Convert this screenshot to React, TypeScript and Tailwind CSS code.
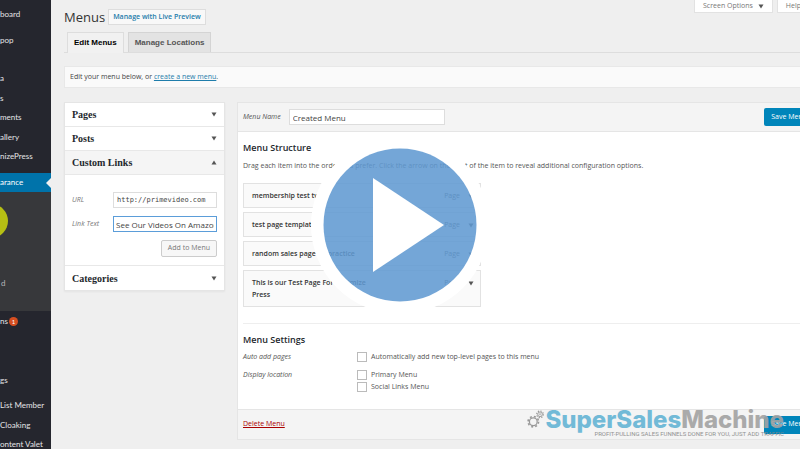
import { useState } from 'react';

interface MenuItem {
  title: string;
  tall?: boolean;
}

const menuItems: MenuItem[] = [
  { title: 'membership test two' },
  { title: 'test page template' },
  { title: 'random sales page w/ practice' },
  { title: 'This is our Test Page For Optimize Press', tall: true },
];

const Arrow = ({ up = false }: { up?: boolean }) => (
  <svg viewBox="0 0 6 5" className="h-[5px] w-[6px] shrink-0 fill-[#555]">
    <path d={up ? 'M0.5 4.5L3 0.5L5.5 4.5Z' : 'M0.5 0.5L3 4.5L5.5 0.5Z'} />
  </svg>
);

const SideLink = ({ label, className = '' }: { label: string; className?: string }) => (
  <a href="#" className={`flex items-center whitespace-nowrap ${className}`}>{label}</a>
);

function Sidebar() {
  return (
    <nav className="w-[51px] shrink-0 overflow-hidden bg-[#25262e] font-[Lato,sans-serif] text-[8px] leading-[19px] text-[#e4e4e6]">
      <SideLink label="board" className="mt-1 h-5" />
      <SideLink label="pop" className="mt-[6px] h-5" />
      <SideLink label="a" className="mt-[18px] h-5" />
      <SideLink label="s" className="h-5" />
      <SideLink label="ments" className="h-[19px]" />
      <SideLink label="allery" className="h-5" />
      <SideLink label="nizePress" className="h-[19px]" />
      <a href="#" className="mt-[7px] flex h-[19px] items-center justify-between bg-[#0073aa] text-white">
        arance
        <svg viewBox="0 0 5 10" className="h-[10px] w-[5px] fill-[#f0f0f0]">
          <path d="M5 0V10L0 5Z" />
        </svg>
      </a>
      <div className="h-[119px] overflow-hidden bg-[#37383b] pt-3">
        <div className="-ml-[26px] size-[34px] rounded-full bg-[#b6bf14]" />
        <SideLink label="d" className="mt-[35px] h-5 pl-px text-[#b5b5b8]" />
      </div>
      <a href="#" className="flex h-5 items-center gap-[1px]">
        ns
        <span className="flex size-[9px] items-center justify-center rounded-full bg-[#d54e21] text-[6px] text-white">1</span>
      </a>
      <SideLink label="gs" className="mt-[39px] h-5" />
      <SideLink label="List Member" className="mt-[5px] h-5" />
      <SideLink label="Cloaking" className="h-5" />
      <SideLink label="ontent Valet" className="h-[18px]" />
    </nav>
  );
}

function Section({ title, open = false }: { title: string; open?: boolean }) {
  return (
    <button className={`flex h-6 w-full items-center justify-between px-[7px] font-['Liberation_Serif',serif] text-[10px] font-bold text-[#23282d] ${open ? 'bg-[#f5f5f5]' : 'bg-white'}`}>
      {title}
      <Arrow up={open} />
    </button>
  );
}

function LinkPanel() {
  const [url, setUrl] = useState('http://primevideo.com');
  const [text, setText] = useState('See Our Videos On Amazon');

  return (
    <div className="w-[161px] shrink-0 divide-y divide-[#e8e8e8] border border-[#e5e5e5] bg-white shadow-xs">
      <Section title="Pages" />
      <Section title="Posts" />
      <Section title="Custom Links" open />
      <div className="flex h-[91px] flex-col gap-2 px-[7px] pt-[17px]">
        <label className="flex items-center justify-between italic text-[#777]">
          URL
          <input
            value={url}
            onChange={e => setUrl(e.target.value)}
            className="h-4 w-[104px] border border-[#ddd] px-[3px] font-['DejaVu_Sans_Mono',monospace] text-[7px] text-[#444] not-italic"
          />
        </label>
        <label className="flex items-center justify-between italic text-[#777]">
          Link Text
          <input
            value={text}
            onChange={e => setText(e.target.value)}
            className="h-4 w-[104px] border border-[#5b9dd9] px-[2px] text-[8px] text-[#444] not-italic"
          />
        </label>
        <button className="h-[17px] self-end rounded-xs border border-[#ccc] bg-[#f7f7f7] px-[6px] text-[#777]">Add to Menu</button>
      </div>
      <Section title="Categories" />
    </div>
  );
}

const SaveButton = () => (
  <button className="h-[18px] rounded-xs bg-[#0085ba] px-[7px] whitespace-nowrap text-white">Save Menu</button>
);

function CheckOption({ label }: { label: string }) {
  return (
    <label className="flex h-3 items-center gap-1">
      <input type="checkbox" className="size-[10px] appearance-none border border-[#bbb] bg-white" />
      {label}
    </label>
  );
}

function MenuEditor() {
  const [name, setName] = useState('Created Menu');

  return (
    <div className="min-w-0 flex-1 border border-[#e5e5e5] bg-white">
      <div className="flex h-[29px] items-center border-b border-[#e5e5e5] bg-[#f4f4f4] px-[5px]">
        <label className="flex flex-1 items-center gap-2 italic text-[#555]">
          Menu Name
          <input
            value={name}
            onChange={e => setName(e.target.value)}
            className="h-4 w-[156px] border border-[#ddd] bg-white px-[3px] text-[8px] text-[#444] not-italic"
          />
        </label>
        <SaveButton />
      </div>

      <div className="h-[277px] px-[5px] pt-[9px]">
        <h2 className="text-[9px] leading-[13px] font-semibold text-[#23282d]">Menu Structure</h2>
        <p className="mt-[5px] leading-[14px] whitespace-nowrap text-[#555]">
          Drag each item into the order you prefer. Click the arrow on the right of the item to reveal additional configuration options.
        </p>
        <ul className="mt-[10px] flex w-[238px] flex-col gap-1">
          {menuItems.map(item => (
            <li
              key={item.title}
              className={`flex justify-between border border-[#e2e2e2] bg-[#fafafa] px-2 pt-[6px] leading-[12px] ${item.tall ? 'h-[37px]' : 'h-[25px]'}`}
            >
              <span className="w-[124px] font-semibold text-[#333]">{item.title}</span>
              <span className="-mr-[2px] flex h-3 items-center gap-2 text-[#555]">
                Page
                <Arrow />
              </span>
            </li>
          ))}
        </ul>

        <div className="mt-4 border-t border-[#eee] pt-[9px]">
          <h2 className="text-[9px] leading-[13px] font-semibold text-[#23282d]">Menu Settings</h2>
          <div className="mt-[5px] grid grid-cols-[114px_1fr] gap-y-[6px] leading-[12px] text-[#555]">
            <span className="italic">Auto add pages</span>
            <CheckOption label="Automatically add new top-level pages to this menu" />
            <span className="italic">Display location</span>
            <div>
              <CheckOption label="Primary Menu" />
              <CheckOption label="Social Links Menu" />
            </div>
          </div>
        </div>
      </div>

      <div className="flex h-[30px] items-center justify-between border-t border-[#e5e5e5] bg-[#f4f4f4] px-[5px]">
        <a href="#" className="text-[#a00] underline">Delete Menu</a>
        <SaveButton />
      </div>
    </div>
  );
}

const PlayButton = () => (
  <button aria-label="Play video" className="absolute top-1/2 left-1/2 size-[178px] -translate-x-1/2 -translate-y-1/2">
    <svg viewBox="0 0 178 178" className="size-full">
      <circle cx="89" cy="89" r="82.5" fill="none" stroke="#fff" strokeWidth="13" />
      <circle cx="89" cy="89" r="76.5" fill="#5f99d1" fillOpacity="0.87" />
      <path d="M62 42V136L133 89Z" fill="#fff" />
    </svg>
  </button>
);

function Watermark() {
  return (
    <div className="pointer-events-none absolute right-4 bottom-3 flex items-start opacity-90">
      <svg viewBox="0 0 20 20" className="h-5 w-[18px] fill-none stroke-[#8f8f8f]">
        <circle cx="7" cy="13" r="4.3" strokeWidth="1.4" />
        <circle cx="7" cy="13" r="5.8" strokeWidth="1.8" strokeDasharray="2.2 2.35" />
        <circle cx="14.5" cy="4.8" r="2.6" strokeWidth="1" />
        <circle cx="14.5" cy="4.8" r="3.7" strokeWidth="1.3" strokeDasharray="1.4 1.5" />
        <circle cx="14.5" cy="4.8" r="0.8" strokeWidth="0.7" />
      </svg>
      <div className="text-right">
        <div className="font-['Inter',sans-serif] text-[24px] leading-[22px] font-extrabold text-[#a3a3a3]">
          <span className="text-[#65b4d4]">SuperSales</span>Machine
        </div>
        <div className="font-['Liberation_Sans_Narrow','Roboto',sans-serif] text-[6px] leading-[6px] text-[#888]">
          PROFIT-PULLING SALES FUNNELS DONE FOR YOU, JUST ADD TRAFFIC
        </div>
      </div>
    </div>
  );
}

export default function App() {
  return (
    <div className="relative flex h-screen overflow-hidden bg-[#efefef] font-['Open_Sans',sans-serif] text-[7px] text-[#444]">
      <Sidebar />
      <main className="min-w-0 flex-1 overflow-hidden pl-[13px]">
        <div className="-mr-5">
          <header className="flex h-8 items-start justify-between">
            <div className="flex items-center gap-[3px] pt-2">
              <h1 className="text-[13px] leading-[18px] text-[#333]">Menus</h1>
              <a href="#" className="flex h-4 items-center border border-[#ddd] bg-[#f8f8f8] px-1 font-semibold text-[#1f7dab]">Manage with Live Preview</a>
            </div>
            <div className="flex gap-1 text-[#777]">
              <button className="flex h-[13px] items-center gap-[5px] border border-t-0 border-[#e2e2e2] bg-white px-2">
                Screen Options
                <Arrow />
              </button>
              <button className="flex h-[13px] items-center gap-1 border border-t-0 border-[#e2e2e2] bg-white px-2">
                Help
                <Arrow />
              </button>
            </div>
          </header>

          <div className="flex h-[21px] gap-1 border-b border-[#ddd] pl-[3px] font-['Liberation_Sans',sans-serif] text-[8px] font-bold">
            <button className="-mb-px border border-b-0 border-[#ddd] bg-[#f1f1f1] px-[6px] text-black">Edit Menus</button>
            <button className="border border-b-0 border-[#d4d4d4] bg-[#e3e3e3] px-[6px] text-[#555]">Manage Locations</button>
          </div>

          <p className="mt-[13px] flex h-[22px] items-center border border-[#e8e8e8] bg-[#fafafa] px-[5px] pt-px whitespace-pre">
            Edit your menu below, or <a href="#" className="text-[#1f7dab] underline">create a new menu</a>.
          </p>

          <div className="mt-[14px] flex items-start gap-3">
            <LinkPanel />
            <MenuEditor />
          </div>
        </div>
      </main>
      <PlayButton />
      <Watermark />
    </div>
  );
}
